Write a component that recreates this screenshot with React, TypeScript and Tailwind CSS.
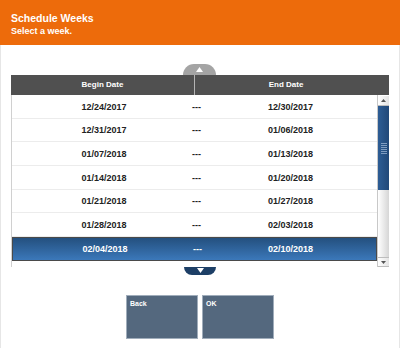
import React from 'react'

const weeks = [
  { begin: '12/24/2017', end: '12/30/2017' },
  { begin: '12/31/2017', end: '01/06/2018' },
  { begin: '01/07/2018', end: '01/13/2018' },
  { begin: '01/14/2018', end: '01/20/2018' },
  { begin: '01/21/2018', end: '01/27/2018' },
  { begin: '01/28/2018', end: '02/03/2018' },
  { begin: '02/04/2018', end: '02/10/2018' },
]

const selected = 6

function ScrollBar() {
  return (
    <div className="w-[12px] flex flex-col border-l border-[#c8c8c8] bg-white">
      {/* up button */}
      <div className="h-[10px] mt-[1px] flex items-center justify-center bg-gradient-to-r from-white to-[#e4e4e4] border-b border-[#bdbdbd]">
        <svg width="5" height="3" viewBox="0 0 5 3"><path d="M0 3 L2.5 0 L5 3 Z" fill="#555" /></svg>
      </div>
      {/* thumb */}
      <div className="h-[84px] bg-gradient-to-r from-[#2d5d95] to-[#214878] flex flex-col items-center justify-center gap-[1px]">
        {[0, 1, 2, 3, 4, 5].map(i => (
          <div key={i} className="w-[6px] h-[1px] bg-[#7f9cc0]" />
        ))}
      </div>
      {/* track */}
      <div className="flex-1 bg-gradient-to-r from-white to-[#d6d6d6]" />
      {/* down button */}
      <div className="h-[10px] flex items-center justify-center bg-gradient-to-r from-white to-[#e4e4e4] border-t border-[#bdbdbd] border-b">
        <svg width="5" height="3" viewBox="0 0 5 3"><path d="M0 0 L5 0 L2.5 3 Z" fill="#555" /></svg>
      </div>
    </div>
  )
}

export default function App() {
  return (
    <div className="w-[400px] h-[348px] bg-white flex flex-col font-['Liberation_Sans',Arial,sans-serif]">
      {/* Title bar */}
      <header className="h-[45px] bg-[#ed6b0b] px-[11px] pt-[12px] text-white font-bold">
        <div className="text-[10.5px] leading-[12px]">Schedule Weeks</div>
        <div className="text-[9px] leading-[12px] mt-[1px]">Select a week.</div>
      </header>

      <div className="flex-1 border-x border-[#e6e6e6] pl-[10px]">
        <div className="relative mt-[30px] w-[378px] flex flex-col">
          {/* scroll up */}
          <div className="absolute left-[172px] -top-[11px] w-[33px] h-[11px] rounded-t-full bg-[#a4a4a4] flex items-end justify-center pb-[3px]">
            <svg width="7" height="5" viewBox="0 0 7 5"><path d="M0 5 L3.5 0 L7 5 Z" fill="#fff" /></svg>
          </div>

          {/* column header */}
          <div className="h-[20px] bg-[#505050] flex items-center text-white text-[8px] font-bold">
            <div className="w-[183px] text-center">Begin Date</div>
            <div className="w-[1px] h-full bg-[#b4b4b4]" />
            <div className="flex-1 text-center pr-[12px]">End Date</div>
          </div>

          {/* rows */}
          <div className="h-[172px] flex border-l border-[#d0d0d0]">
            <div className="flex-1 flex flex-col">
              {weeks.map((w, i) => (
                <div
                  key={w.begin}
                  className={
                    i === selected
                      ? 'h-[23.7px] flex items-center pt-[1px] text-[9px] font-bold text-white bg-gradient-to-b from-[#24507f] to-[#3b78ba] border border-[#4a4a4a]'
                      : 'h-[23.7px] flex items-center pt-[2px] text-[9px] font-bold text-[#222] border-b border-[#ececec]'
                  }
                >
                  <span className="w-[180px] pl-[4px] text-center">{w.begin}</span>
                  <span className="w-[8px] text-center whitespace-nowrap">---</span>
                  <span className="flex-1 pl-[4px] text-center">{w.end}</span>
                </div>
              ))}
            </div>
            <ScrollBar />
          </div>

          {/* scroll down */}
          <div className="self-center w-[32px] h-[8px] rounded-b-full bg-[#1d3f66] flex items-start justify-center pt-[1px]">
            <svg width="7" height="5" viewBox="0 0 7 5"><path d="M0 0 L7 0 L3.5 5 Z" fill="#fff" /></svg>
          </div>

          {/* actions */}
          <div className="mt-[20px] flex justify-center gap-[4px]">
            <button className="w-[72px] h-[44px] bg-[#54687e] border border-[#a0adbb] text-white text-[7px] font-bold text-left flex items-start px-[3px] pt-[3px]">
              Back
            </button>
            <button className="w-[72px] h-[44px] bg-[#54687e] border border-[#a0adbb] text-white text-[7px] font-bold text-left flex items-start px-[3px] pt-[3px]">
              OK
            </button>
          </div>
        </div>
      </div>
    </div>
  )
}
